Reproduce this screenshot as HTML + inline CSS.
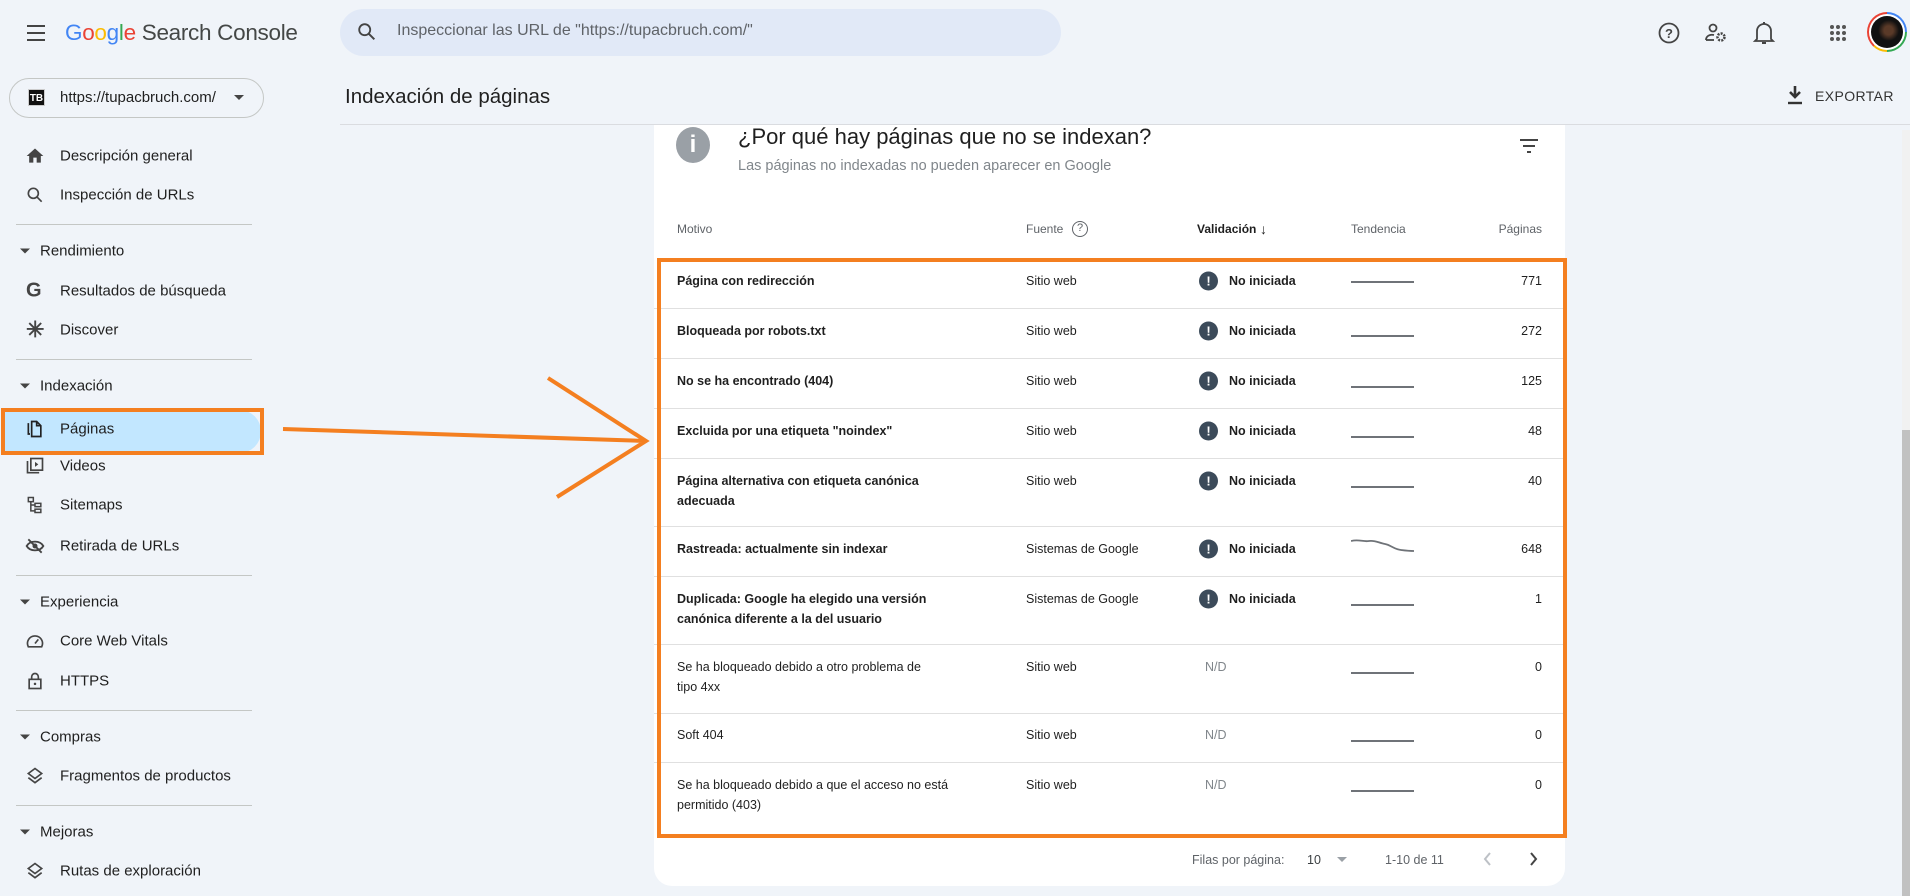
<!DOCTYPE html>
<html><head><meta charset="utf-8"><style>
*{margin:0;padding:0;box-sizing:border-box}
body{width:1910px;height:896px;overflow:hidden;background:#f0f4f9;font-family:"Liberation Sans",Arial,sans-serif;color:#1f1f1f;position:relative}
.a{position:absolute}
.nav{position:absolute;left:60px;font-size:15px;color:#1f1f1f;transform:translateY(-50%);white-space:nowrap}
.ic{position:absolute;left:25px;width:20px;height:20px;transform:translateY(-50%)}
.sec{position:absolute;left:40px;font-size:15px;color:#1f1f1f;transform:translateY(-50%)}
.tri{position:absolute;left:20px;width:0;height:0;border-left:5px solid transparent;border-right:5px solid transparent;border-top:5px solid #444;transform:translateY(-50%)}
.div{position:absolute;left:16px;width:236px;height:1px;background:#c4c7c5}
.t{position:absolute;font-size:12.5px;white-space:nowrap;transform:translateY(-50%)}
.b{font-weight:bold}
.sep{position:absolute;left:654px;width:911px;height:1px;background:#e0e0e0}
.ex{position:absolute;left:1199px;width:19px;height:19px;border-radius:50%;background:#3c4b5a;color:#fff;font-weight:bold;font-size:13px;text-align:center;line-height:19px;transform:translateY(-50%)}
.tr{position:absolute;left:1351px;width:63px;height:2px;background:#6f7378}
.num{position:absolute;right:368px;font-size:12.5px;transform:translateY(-50%)}
</style></head><body>
<svg class="a" style="left:26px;top:24px" width="20" height="18" viewBox="0 0 20 18"><path d="M1 2h18M1 9h18M1 16h18" stroke="#444" stroke-width="2"/></svg>
<div class="a" style="left:65px;top:20px;font-size:22.5px;letter-spacing:-0.3px;white-space:nowrap"><span style="color:#4285f4">G</span><span style="color:#ea4335">o</span><span style="color:#fbbc04">o</span><span style="color:#4285f4">g</span><span style="color:#34a853">l</span><span style="color:#ea4335">e</span><span style="color:#444746"> Search Console</span></div>
<div class="a" style="left:340px;top:9px;width:721px;height:47px;border-radius:24px;background:#e1e9f7"></div>
<svg class="a" style="left:356px;top:21px" width="22" height="22" viewBox="0 0 24 24"><circle cx="9.5" cy="9.5" r="6" fill="none" stroke="#444" stroke-width="2"/><path d="M14 14l6 6" stroke="#444" stroke-width="2.2"/></svg>
<div class="a" style="left:397px;top:22px;font-size:16px;color:#5f6368">Inspeccionar las URL de "https://tupacbruch.com/"</div>
<svg class="a" style="left:1657px;top:21px" width="24" height="24" viewBox="0 0 24 24"><circle cx="12" cy="12" r="9.5" fill="none" stroke="#444" stroke-width="1.8"/><text x="12" y="17" text-anchor="middle" font-size="13" font-family="Liberation Sans" fill="#444" font-weight="bold">?</text></svg>
<svg class="a" style="left:1704px;top:21px" width="24" height="24" viewBox="0 0 24 24"><circle cx="9" cy="7" r="3.5" fill="none" stroke="#444" stroke-width="1.8"/><path d="M2 19c0-4 4-6 8-5" fill="none" stroke="#444" stroke-width="1.8"/><path d="M2 19h8" stroke="#444" stroke-width="1.8"/><circle cx="17" cy="16" r="3.5" fill="none" stroke="#444" stroke-width="2.5" stroke-dasharray="2 1.2"/></svg>
<svg class="a" style="left:1752px;top:20px" width="24" height="26" viewBox="0 0 24 26"><path d="M5 19V11a7 7 0 0 1 14 0v8l2 2H3z" fill="none" stroke="#444" stroke-width="1.8"/><path d="M10 23h4" stroke="#444" stroke-width="2"/><path d="M12 2v2" stroke="#444" stroke-width="2"/></svg>
<svg class="a" style="left:1829px;top:24px" width="18" height="18" viewBox="0 0 18 18" fill="#555"><circle cx="3" cy="3" r="2"/><circle cx="9" cy="3" r="2"/><circle cx="15" cy="3" r="2"/><circle cx="3" cy="9" r="2"/><circle cx="9" cy="9" r="2"/><circle cx="15" cy="9" r="2"/><circle cx="3" cy="15" r="2"/><circle cx="9" cy="15" r="2"/><circle cx="15" cy="15" r="2"/></svg>
<div class="a" style="left:1867px;top:12px;width:40px;height:40px;border-radius:50%;background:conic-gradient(#4285f4 0 25%,#34a853 25% 50%,#fbbc04 50% 62%,#ea4335 62% 100%)"></div>
<div class="a" style="left:1869px;top:14px;width:36px;height:36px;border-radius:50%;background:#fff"></div>
<div class="a" style="left:1871px;top:16px;width:32px;height:32px;border-radius:50%;background:radial-gradient(circle at 55% 45%,#5a3a28 0 18%,#111 42%)"></div>

<div class="a" style="left:9px;top:78px;width:255px;height:40px;border:1px solid #c4c7c5;border-radius:20px"></div>
<div class="a" style="left:28px;top:89px;width:17px;height:17px;background:#111;color:#fff;font-size:10px;font-weight:bold;text-align:center;line-height:17px;border:1px solid #ccc">TB</div>
<div class="a" style="left:60px;top:89px;font-size:15px;color:#1f1f1f">https://tupacbruch.com/</div>
<div class="a" style="left:234px;top:95px;border-left:5px solid transparent;border-right:5px solid transparent;border-top:5px solid #444"></div>

<div class="a" style="left:345px;top:85px;font-size:20.5px;color:#1f1f1f">Indexación de páginas</div>
<div class="a" style="left:340px;top:124px;width:1570px;height:1px;background:#dadce0"></div>
<svg class="a" style="left:1786px;top:85px" width="18" height="20" viewBox="0 0 18 20"><path d="M9 1v11M4 7l5 5 5-5" stroke="#333" stroke-width="2.6" fill="none"/><path d="M2 18h14" stroke="#333" stroke-width="2.4"/></svg>
<div class="a" style="left:1815px;top:88px;font-size:14px;color:#333;letter-spacing:0.4px">EXPORTAR</div>

<svg class="ic" style="top:156px" viewBox="0 0 24 24"><path d="M12 3L2 12h3v8h5v-6h4v6h5v-8h3z" fill="#444"/></svg>
<div class="nav" style="top:156px">Descripción general</div>
<svg class="ic" style="top:195px" viewBox="0 0 24 24"><circle cx="10" cy="10" r="6" fill="none" stroke="#444" stroke-width="2"/><path d="M14.5 14.5l5.5 5.5" stroke="#444" stroke-width="2"/></svg>
<div class="nav" style="top:195px">Inspección de URLs</div>
<div class="div" style="top:224px"></div>
<div class="tri" style="top:251px"></div><div class="sec" style="top:251px">Rendimiento</div>
<div class="nav" style="top:291px;left:26px;font-weight:bold;font-size:20px;color:#444">G</div>
<div class="nav" style="top:291px">Resultados de búsqueda</div>
<div class="nav" style="top:330px;left:26px;font-weight:bold;font-size:22px;color:#444">✳</div>
<div class="nav" style="top:330px">Discover</div>
<div class="div" style="top:359px"></div>
<div class="tri" style="top:386px"></div><div class="sec" style="top:386px">Indexación</div>
<div class="a" style="left:2px;top:410px;width:259px;height:43px;background:#c2e7ff;border-radius:0 22px 22px 0"></div>
<div class="a" style="left:1px;top:408px;width:263px;height:47px;border:4px solid #f47f20"></div>
<svg class="ic" style="top:429px" viewBox="0 0 24 24"><path d="M4 5v13h2M8 3h6l5 5v13H8z" fill="none" stroke="#222" stroke-width="2"/><path d="M14 3v5h5" fill="none" stroke="#222" stroke-width="2"/></svg>
<div class="nav" style="top:429px">Páginas</div>
<svg class="ic" style="top:466px" viewBox="0 0 24 24"><path d="M3 6v14h14" fill="none" stroke="#444" stroke-width="2"/><rect x="7" y="3" width="14" height="14" fill="none" stroke="#444" stroke-width="2"/><path d="M12 7v6l4-3z" fill="#444"/></svg>
<div class="nav" style="top:466px">Videos</div>
<svg class="ic" style="top:505px" viewBox="0 0 24 24"><rect x="4" y="3" width="6" height="5" fill="none" stroke="#444" stroke-width="1.8"/><rect x="12" y="10" width="7" height="4" fill="none" stroke="#444" stroke-width="1.8"/><rect x="12" y="17" width="7" height="4" fill="none" stroke="#444" stroke-width="1.8"/><path d="M7 8v11h5M7 12h5" fill="none" stroke="#444" stroke-width="1.8"/></svg>
<div class="nav" style="top:505px">Sitemaps</div>
<svg class="ic" style="top:546px" viewBox="0 0 24 24"><path d="M2 12c4-7 16-7 20 0-4 7-16 7-20 0z" fill="none" stroke="#444" stroke-width="2.2"/><circle cx="12" cy="12" r="3" fill="#444"/><path d="M4 4l16 16" stroke="#444" stroke-width="2.2"/></svg>
<div class="nav" style="top:546px">Retirada de URLs</div>
<div class="div" style="top:575px"></div>
<div class="tri" style="top:602px"></div><div class="sec" style="top:602px">Experiencia</div>
<svg class="ic" style="top:641px" viewBox="0 0 24 24"><path d="M4 19a9 9 0 1 1 16 0z" fill="none" stroke="#444" stroke-width="2"/><path d="M12 15l4-5" stroke="#444" stroke-width="2"/></svg>
<div class="nav" style="top:641px">Core Web Vitals</div>
<svg class="ic" style="top:681px" viewBox="0 0 24 24"><rect x="5" y="10" width="14" height="11" fill="none" stroke="#444" stroke-width="2"/><path d="M8 10V7a4 4 0 0 1 8 0v3" fill="none" stroke="#444" stroke-width="2"/><circle cx="12" cy="15.5" r="1.5" fill="#444"/></svg>
<div class="nav" style="top:681px">HTTPS</div>
<div class="div" style="top:710px"></div>
<div class="tri" style="top:737px"></div><div class="sec" style="top:737px">Compras</div>
<svg class="ic" style="top:776px" viewBox="0 0 24 24"><path d="M12 3l8 6-8 6-8-6z M4 14l8 6 8-6" fill="none" stroke="#444" stroke-width="2"/></svg>
<div class="nav" style="top:776px">Fragmentos de productos</div>
<div class="div" style="top:805px"></div>
<div class="tri" style="top:832px"></div><div class="sec" style="top:832px">Mejoras</div>
<svg class="ic" style="top:871px" viewBox="0 0 24 24"><path d="M12 3l8 6-8 6-8-6z M4 14l8 6 8-6" fill="none" stroke="#444" stroke-width="2"/></svg>
<div class="nav" style="top:871px">Rutas de exploración</div>

<div class="a" style="left:654px;top:125px;width:911px;height:761px;background:#fff;border-radius:0 0 18px 18px"></div>
<div class="a" style="left:676px;top:127px;width:34px;height:36px;border-radius:50%;background:#9aa0a6;color:#fff;font-weight:bold;font-size:24px;text-align:center;line-height:36px">i</div>
<div class="a" style="left:738px;top:124px;font-size:22px;color:#1f1f1f">¿Por qué hay páginas que no se indexan?</div>
<div class="a" style="left:738px;top:158px;font-size:14.5px;color:#80868b">Las páginas no indexadas no pueden aparecer en Google</div>
<svg class="a" style="left:1519px;top:138px" width="20" height="16" viewBox="0 0 20 16"><path d="M1 2h18M4 8h12M8 14h4" stroke="#444" stroke-width="2"/></svg>

<div class="t" style="left:677px;top:229px;color:#5f6368;font-size:12px">Motivo</div>
<div class="t" style="left:1026px;top:229px;color:#5f6368;font-size:12px">Fuente</div>
<div class="a" style="left:1072px;top:221px;width:16px;height:16px;border:1.5px solid #5f6368;border-radius:50%;font-size:11px;color:#5f6368;text-align:center;line-height:13px">?</div>
<div class="t b" style="left:1197px;top:229px;font-size:12px">Validación</div>
<div class="t" style="left:1260px;top:229px;font-size:14px">↓</div>
<div class="t" style="left:1351px;top:229px;color:#5f6368;font-size:12px">Tendencia</div>
<div class="num" style="top:229px;color:#5f6368;font-size:12px">Páginas</div>

<div class="sep" style="top:308px"></div><div class="sep" style="top:358px"></div><div class="sep" style="top:408px"></div><div class="sep" style="top:458px"></div><div class="sep" style="top:526px"></div><div class="sep" style="top:576px"></div><div class="sep" style="top:644px"></div><div class="sep" style="top:713px"></div><div class="sep" style="top:762px"></div>

<div class="t b" style="left:677px;top:281px">Página con redirección</div>
<div class="t" style="left:1026px;top:281px">Sitio web</div><div class="ex" style="top:281px">!</div><div class="t b" style="left:1229px;top:281px">No iniciada</div><div class="tr" style="top:281px"></div><div class="num" style="top:281px">771</div>

<div class="t b" style="left:677px;top:331px">Bloqueada por robots.txt</div>
<div class="t" style="left:1026px;top:331px">Sitio web</div><div class="ex" style="top:331px">!</div><div class="t b" style="left:1229px;top:331px">No iniciada</div><div class="tr" style="top:335px"></div><div class="num" style="top:331px">272</div>

<div class="t b" style="left:677px;top:381px">No se ha encontrado (404)</div>
<div class="t" style="left:1026px;top:381px">Sitio web</div><div class="ex" style="top:381px">!</div><div class="t b" style="left:1229px;top:381px">No iniciada</div><div class="tr" style="top:386px"></div><div class="num" style="top:381px">125</div>

<div class="t b" style="left:677px;top:431px">Excluida por una etiqueta "noindex"</div>
<div class="t" style="left:1026px;top:431px">Sitio web</div><div class="ex" style="top:431px">!</div><div class="t b" style="left:1229px;top:431px">No iniciada</div><div class="tr" style="top:436px"></div><div class="num" style="top:431px">48</div>

<div class="t b" style="left:677px;top:481px">Página alternativa con etiqueta canónica</div>
<div class="t b" style="left:677px;top:501px">adecuada</div>
<div class="t" style="left:1026px;top:481px">Sitio web</div><div class="ex" style="top:481px">!</div><div class="t b" style="left:1229px;top:481px">No iniciada</div><div class="tr" style="top:486px"></div><div class="num" style="top:481px">40</div>

<div class="t b" style="left:677px;top:549px">Rastreada: actualmente sin indexar</div>
<div class="t" style="left:1026px;top:549px">Sistemas de Google</div><div class="ex" style="top:549px">!</div><div class="t b" style="left:1229px;top:549px">No iniciada</div>
<svg class="a" style="left:1351px;top:538px" width="64" height="16" viewBox="0 0 64 16"><path d="M0 3C8 1 12 4 18 3S28 5 34 6 42 11 50 12 58 13 63 13" fill="none" stroke="#6f7378" stroke-width="1.8"/></svg>
<div class="num" style="top:549px">648</div>

<div class="t b" style="left:677px;top:599px">Duplicada: Google ha elegido una versión</div>
<div class="t b" style="left:677px;top:619px">canónica diferente a la del usuario</div>
<div class="t" style="left:1026px;top:599px">Sistemas de Google</div><div class="ex" style="top:599px">!</div><div class="t b" style="left:1229px;top:599px">No iniciada</div><div class="tr" style="top:604px"></div><div class="num" style="top:599px">1</div>

<div class="t" style="left:677px;top:667px">Se ha bloqueado debido a otro problema de</div>
<div class="t" style="left:677px;top:687px">tipo 4xx</div>
<div class="t" style="left:1026px;top:667px">Sitio web</div><div class="t" style="left:1205px;top:667px;color:#80868b">N/D</div><div class="tr" style="top:672px"></div><div class="num" style="top:667px">0</div>

<div class="t" style="left:677px;top:735px">Soft 404</div>
<div class="t" style="left:1026px;top:735px">Sitio web</div><div class="t" style="left:1205px;top:735px;color:#80868b">N/D</div><div class="tr" style="top:740px"></div><div class="num" style="top:735px">0</div>

<div class="t" style="left:677px;top:785px">Se ha bloqueado debido a que el acceso no está</div>
<div class="t" style="left:677px;top:805px">permitido (403)</div>
<div class="t" style="left:1026px;top:785px">Sitio web</div><div class="t" style="left:1205px;top:785px;color:#80868b">N/D</div><div class="tr" style="top:790px"></div><div class="num" style="top:785px">0</div>

<div class="a" style="left:657px;top:258px;width:910px;height:580px;border:4px solid #f47f20"></div>

<div class="t" style="left:1192px;top:860px;color:#5f6368;font-size:12.5px">Filas por página:</div>
<div class="t" style="left:1307px;top:860px;color:#3c4043">10</div>
<div class="a" style="left:1337px;top:857px;border-left:5px solid transparent;border-right:5px solid transparent;border-top:5px solid #9aa0a6"></div>
<div class="t" style="left:1385px;top:860px;color:#5f6368">1-10 de 11</div>
<svg class="a" style="left:1482px;top:851px" width="12" height="16" viewBox="0 0 12 16"><path d="M8 2L3 8l5 6" fill="none" stroke="#bdc1c6" stroke-width="2"/></svg>
<svg class="a" style="left:1527px;top:851px" width="12" height="16" viewBox="0 0 12 16"><path d="M4 2l5 6-5 6" fill="none" stroke="#444" stroke-width="2"/></svg>

<svg class="a" style="left:0;top:0" width="1910" height="896"><path d="M283 429L646 441M548 378L646 441L557 497" fill="none" stroke="#f47f20" stroke-width="4"/></svg>

<div class="a" style="left:1902px;top:130px;width:8px;height:766px;background:#f1f1f1"></div>
<div class="a" style="left:1902px;top:430px;width:8px;height:466px;background:#c1c1c1"></div>
</body></html>
